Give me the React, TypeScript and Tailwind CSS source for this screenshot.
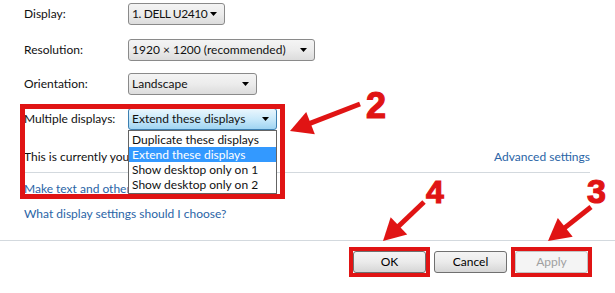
import React from "react";

const RED = "#e01414";

function Combo({ w, text, active = false, tight = false, children }: { w: string; text: string; active?: boolean; tight?: boolean; children?: React.ReactNode }) {
  return (
    <div className={`relative ${w} h-[22px]`}>
      <div
        className={`flex h-full items-center justify-between rounded-[3px] border pl-[3px] pr-[7px] ${
          active
            ? "border-[#3c7fb1] bg-linear-to-b from-[#eaf6fd] via-[#c9e9fa] to-[#9fd4f2]"
            : "border-[#8a8a8a] bg-linear-to-b from-[#f4f4f4] via-[#ececec] to-[#dcdcdc]"
        }`}
      >
        <span className={`whitespace-nowrap ${tight ? "tracking-[-0.4px]" : ""}`}>{text}</span>
        <svg width="7" height="4" viewBox="0 0 7 4" className="shrink-0">
          <path d="M0 0 H7 L3.5 4 Z" fill="#000" />
        </svg>
      </div>
      {children}
    </div>
  );
}

function Row({ label, className = "", children }: { label: string; className?: string; children: React.ReactNode }) {
  return (
    <div className={`flex h-[22px] items-center ${className}`}>
      <span className="w-[104px] shrink-0">{label}</span>
      {children}
    </div>
  );
}

function Arrow({ x1, y1, x2, y2, head = 22, hw = 12 }: { x1: number; y1: number; x2: number; y2: number; head?: number; hw?: number }) {
  const dx = x2 - x1;
  const dy = y2 - y1;
  const len = Math.hypot(dx, dy);
  const ux = dx / len;
  const uy = dy / len;
  const bx = x2 - ux * head;
  const by = y2 - uy * head;
  const px = -uy;
  const py = ux;
  const pts = `${x2},${y2} ${bx + px * hw},${by + py * hw} ${bx - px * hw},${by - py * hw}`;
  return (
    <g>
      <line x1={x1} y1={y1} x2={bx + ux * 2} y2={by + uy * 2} stroke={RED} strokeWidth={5} />
      <polygon points={pts} fill={RED} />
    </g>
  );
}

function Btn({ label, disabled = false, marked = false }: { label: string; disabled?: boolean; marked?: boolean }) {
  return (
    <div className={marked ? "outline-4 outline-solid outline-[#e01414]" : ""}>
      <div
        className={`flex h-[22px] w-[73px] items-center justify-center rounded-[3px] border ${
          disabled
            ? "border-[#c3c3c3] bg-[#f4f4f4] text-[#a0a0a0]"
            : "border-[#707070] bg-linear-to-b from-[#f4f4f4] via-[#ebebeb] to-[#d6d6d6] text-black"
        }`}
      >
        {label}
      </div>
    </div>
  );
}

export default function App() {
  return (
    <div className="relative h-[293px] w-[615px] overflow-hidden bg-white font-['Lato',sans-serif] text-[12px] text-[#111]">
      <div className="pl-6 pr-[25px]">
        <Row label="Display:" className="mt-[3px]">
          <Combo w="w-[97px]" text="1. DELL U2410" tight />
        </Row>
        <Row label="Resolution:" className="mt-[14px]">
          <Combo w="w-[187px]" text="1920 × 1200 (recommended)" />
        </Row>
        <Row label="Orientation:" className="mt-[12px]">
          <Combo w="w-[129px]" text="Landscape" />
        </Row>
        <Row label="Multiple displays:" className="mt-[13px]">
          <Combo w="w-[149px]" text="Extend these displays" active>
            <div className="absolute left-0 top-full z-10 w-full border border-[#646464] bg-white py-[1px]">
              <div className="h-[15px] pl-[3px] leading-[15px]">Duplicate these displays</div>
              <div className="h-[15px] bg-[#3399ff] pl-[3px] leading-[15px] text-white">Extend these displays</div>
              <div className="h-[15px] pl-[3px] leading-[15px]">Show desktop only on 1</div>
              <div className="h-[15px] pl-[3px] leading-[15px]">Show desktop only on 2</div>
            </div>
          </Combo>
        </Row>
        <div className="mt-[19px] flex h-4 items-center justify-between leading-4">
          <span>This is currently your main display.</span>
          <span className="text-[#2a64a6]">Advanced settings</span>
        </div>
        <div className="mt-[7px] border-t border-[#d3d9de]" />
        <div className="mt-2 h-4 leading-4 text-[#2a64a6] underline">Make text and other items larger or smaller</div>
        <div className="mt-[9px] h-4 leading-4 text-[#2a64a6]">What display settings should I choose?</div>
      </div>
      <div className="mt-[18px] border-t border-[#d3d9de]" />
      <div className="mt-[10px] flex justify-end gap-2 pr-[27px]">
        <Btn label="OK" marked />
        <Btn label="Cancel" />
        <Btn label="Apply" disabled marked />
      </div>

      <div className="pointer-events-none absolute left-[20px] top-[104px] z-20 h-[95px] w-[265px] border-[5px] border-[#e01414]" />

      <svg className="pointer-events-none absolute left-0 top-0 z-30" width="615" height="293" viewBox="0 0 615 293">
        <Arrow x1={360} y1={104} x2={290} y2={131} />
        <Arrow x1={424} y1={202} x2={383} y2={241} />
        <Arrow x1={591} y1={207} x2={548} y2={241} />
        <text x="366" y="118" fontFamily="Liberation Sans, Arial, sans-serif" fontWeight="bold" fontSize="36" fill={RED} stroke={RED} strokeWidth="1.2">2</text>
        <text x="426" y="203" fontFamily="Liberation Sans, Arial, sans-serif" fontWeight="bold" fontSize="32" fill={RED} stroke={RED} strokeWidth="1.2">4</text>
        <text x="587" y="203" fontFamily="Liberation Sans, Arial, sans-serif" fontWeight="bold" fontSize="34" fill={RED} stroke={RED} strokeWidth="1.2">3</text>
      </svg>
    </div>
  );
}
